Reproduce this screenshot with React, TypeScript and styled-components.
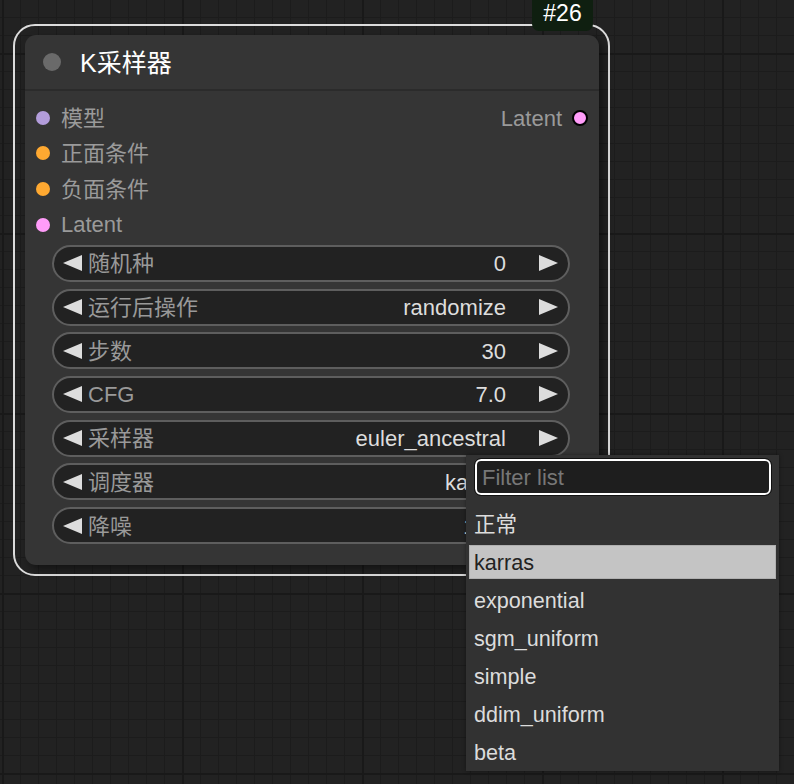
import React from 'react';
import styled, { createGlobalStyle } from 'styled-components';

const Global = createGlobalStyle`
  html, body { margin: 0; padding: 0; }
  body {
    background: #222222;
    font-family: "Liberation Sans", "Noto Sans CJK SC", sans-serif;
    overflow: hidden;
  }
  * { box-sizing: border-box; }
`;

const Canvas = styled.div`
  position: relative;
  width: 794px;
  height: 784px;
  overflow: hidden;
  background-color: #222222;
  background-image:
    linear-gradient(to right, #191919 2px, transparent 2px),
    linear-gradient(to bottom, #191919 2px, transparent 2px),
    linear-gradient(to right, #1c1c1c 1px, transparent 1px),
    linear-gradient(to bottom, #1c1c1c 1px, transparent 1px);
  background-size: 180px 180px, 180px 180px, 18px 18px, 18px 18px;
  background-position: 2px 0, 0 53px, 2px 0, 0 17px;
`;

const Selection = styled.div`
  position: absolute;
  left: 13px;
  top: 24px;
  width: 597px;
  height: 552px;
  border: 2px solid #dcdcdc;
  border-radius: 22px;
`;

const Badge = styled.div`
  position: absolute;
  left: 532px;
  top: 0;
  width: 61px;
  height: 31px;
  background: #0f1f10;
  border-radius: 0 0 7px 7px;
  color: #ffffff;
  font-size: 23px;
  line-height: 1.2;
  display: flex;
  align-items: center;
  justify-content: center;
  padding-bottom: 3px;
`;

const Node = styled.div`
  position: absolute;
  left: 25px;
  top: 35px;
  width: 574px;
  height: 530px;
  background: #353535;
  border-radius: 11px;
  box-shadow: 4px 4px 9px rgba(0, 0, 0, 0.45);
  display: flex;
  flex-direction: column;
  line-height: 1.2;
`;

const TitleBar = styled.div`
  height: 56px;
  display: flex;
  align-items: center;
  padding-left: 18px;
  gap: 19px;
  border-bottom: 2px solid #2b2b2b;
`;

const TitleDot = styled.div`
  width: 18px;
  height: 18px;
  border-radius: 50%;
  background: #6a6a6a;
`;

const TitleText = styled.div`
  color: #ffffff;
  font-size: 25px;
  margin-top: 1px;
`;

const Slots = styled.div`
  display: flex;
  flex-direction: column;
  padding: 9px 11px 0 11px;
`;

const SlotRow = styled.div`
  height: 35.6px;
  display: flex;
  align-items: center;
  justify-content: space-between;
`;

const Slot = styled.div`
  display: flex;
  align-items: center;
  gap: 11px;
  color: #9a9a9a;
  font-size: 22px;
`;

const SlotName = styled.span`
  margin-top: 2px;
`;

const OutSlot = styled(Slot)`
  gap: 10px;
`;

const Dot = styled.div<{ $color: string; $out?: boolean }>`
  width: ${(p) => (p.$out ? 16 : 14)}px;
  height: ${(p) => (p.$out ? 16 : 14)}px;
  border-radius: 50%;
  background: ${(p) => p.$color};
  border: ${(p) => (p.$out ? '2px solid #000' : 'none')};
`;

const Widgets = styled.div`
  display: flex;
  flex-direction: column;
  gap: 6.7px;
  padding: 2.5px 29px 0 27px;
`;

const Widget = styled.div`
  height: 37px;
  border: 2px solid #5e5e5e;
  border-radius: 19px;
  background: #222222;
  display: flex;
  align-items: center;
  padding: 0 10px 0 9px;
  font-size: 22px;
  line-height: 26px;
`;

const Label = styled.div`
  flex: 1;
  color: #999999;
  margin: 2px 0 0 6px;
  white-space: nowrap;
`;

const Value = styled.div`
  color: #dddddd;
  white-space: nowrap;
  margin: 2px 33px 0 0;
`;

const ArrowSvg = styled.svg`
  width: 19px;
  height: 16px;
  flex: none;
  fill: #dddddd;
`;

const Menu = styled.div`
  position: absolute;
  left: 466px;
  top: 455px;
  width: 313px;
  height: 316px;
  background: #323232;
  box-shadow: 0 0 4px rgba(0, 0, 0, 0.4);
  display: flex;
  flex-direction: column;
  padding: 4px 3px 0 3px;
  z-index: 5;
  line-height: 1.2;
`;

const Filter = styled.input`
  margin-left: 6px;
  height: 36px;
  width: 296px;
  background: #1e1e1e;
  border: 2px solid #ffffff;
  outline: 1px solid #111;
  border-radius: 6px;
  color: #dddddd;
  font-family: "Liberation Sans", "Noto Sans CJK SC", sans-serif;
  font-size: 22px;
  padding: 2px 0 0 5px;
  &::placeholder {
    color: #777777;
  }
`;

const Items = styled.div`
  display: flex;
  flex-direction: column;
  margin-top: 10px;
`;

const Item = styled.div<{ $active?: boolean }>`
  height: 34px;
  margin: 2px 0;
  display: flex;
  align-items: center;
  padding: 2px 0 0 4px;
  font-size: 21.6px;
  color: ${(p) => (p.$active ? '#222222' : '#dcdcdc')};
  background: ${(p) => (p.$active ? '#c4c4c4' : 'transparent')};
  border: 1px solid ${(p) => (p.$active ? '#b0b0b0' : 'transparent')};
`;

const LeftArrow = () => (
  <ArrowSvg viewBox="0 0 19 16">
    <polygon points="19,0 19,16 0,8" />
  </ArrowSvg>
);

const RightArrow = () => (
  <ArrowSvg viewBox="0 0 19 16">
    <polygon points="0,0 0,16 19,8" />
  </ArrowSvg>
);

const inputs = [
  { name: '模型', color: '#b39ddb' },
  { name: '正面条件', color: '#ffa931' },
  { name: '负面条件', color: '#ffa931' },
  { name: 'Latent', color: '#ff9cf9' },
];

const widgets = [
  { label: '随机种', value: '0' },
  { label: '运行后操作', value: 'randomize' },
  { label: '步数', value: '30' },
  { label: 'CFG', value: '7.0' },
  { label: '采样器', value: 'euler_ancestral' },
  { label: '调度器', value: 'karras' },
  { label: '降噪', value: '1.00' },
];

const options = ['正常', 'karras', 'exponential', 'sgm_uniform', 'simple', 'ddim_uniform', 'beta'];

export default function App() {
  return (
    <>
      <Global />
      <Canvas>
        <Selection />
        <Node>
          <TitleBar>
            <TitleDot />
            <TitleText>K采样器</TitleText>
          </TitleBar>
          <Slots>
            {inputs.map((inp, i) => (
              <SlotRow key={inp.name + i}>
                <Slot>
                  <Dot $color={inp.color} />
                  <SlotName>{inp.name}</SlotName>
                </Slot>
                {i === 0 && (
                  <OutSlot>
                    <SlotName>Latent</SlotName>
                    <Dot $color="#ff9cf9" $out />
                  </OutSlot>
                )}
              </SlotRow>
            ))}
          </Slots>
          <Widgets>
            {widgets.map((w) => (
              <Widget key={w.label}>
                <LeftArrow />
                <Label>{w.label}</Label>
                <Value>{w.value}</Value>
                <RightArrow />
              </Widget>
            ))}
          </Widgets>
        </Node>
        <Badge>#26</Badge>
        <Menu>
          <Filter placeholder="Filter list" />
          <Items>
            {options.map((o) => (
              <Item key={o} $active={o === 'karras'}>
                {o}
              </Item>
            ))}
          </Items>
        </Menu>
      </Canvas>
    </>
  );
}
